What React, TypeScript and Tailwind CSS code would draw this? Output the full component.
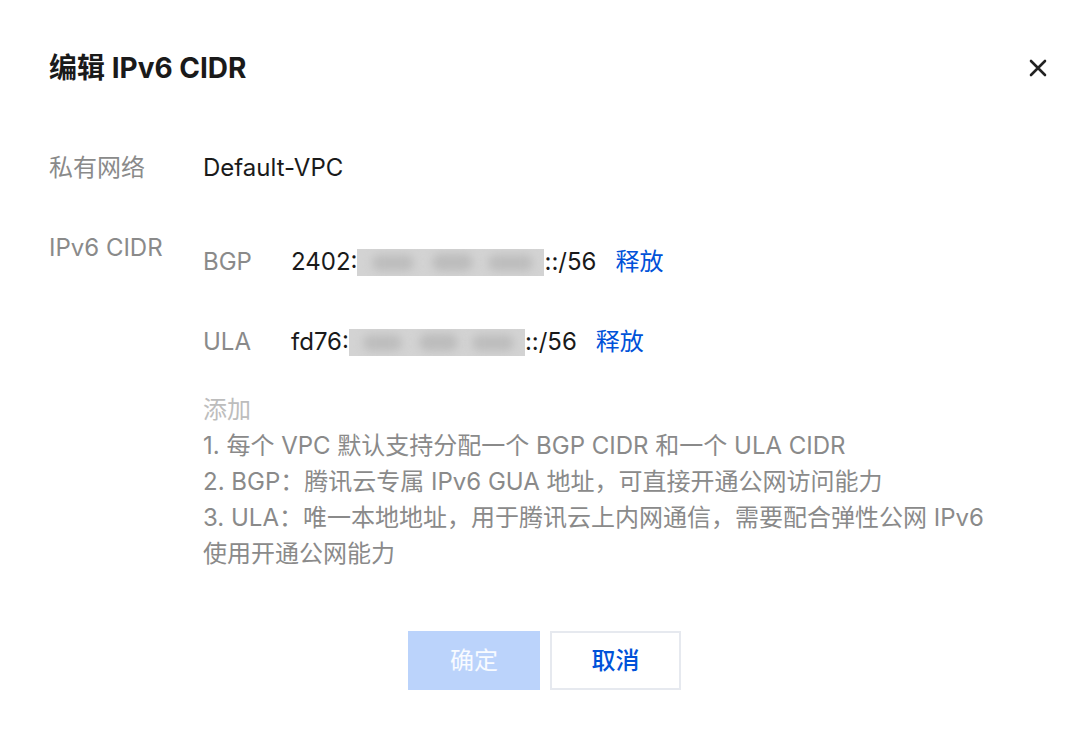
import React from 'react';

const font = 'font-["Inter","Noto_Sans_CJK_SC",sans-serif]';

const Masked: React.FC<{ width: string }> = ({ width }) => (
  <span className={`relative inline-block h-[27px] overflow-hidden bg-[#d3d3d3] ${width}`}>
    <span className="absolute left-[8%] top-[6px] h-[16px] w-[22%] rounded-full bg-[#bdbdbd] blur-[4px]" />
    <span className="absolute left-[40%] top-[5px] h-[17px] w-[22%] rounded-full bg-[#bcbcbc] blur-[4px]" />
    <span className="absolute left-[70%] top-[6px] h-[16px] w-[24%] rounded-full bg-[#bdbdbd] blur-[4px]" />
  </span>
);

const CidrRow: React.FC<{ kind: string; prefix: string; mask: string }> = ({ kind, prefix, mask }) => (
  <div className="flex h-[36px] items-center">
    <span className="w-[88px] text-[#8a8a8a]">{kind}</span>
    <span className="text-[#1a1a1a]">{prefix}</span>
    <Masked width={mask} />
    <span className="text-[#1a1a1a]">::/56</span>
    <button className="ml-[19px] text-[#0052d9]">释放</button>
  </div>
);

export default function App() {
  return (
    <div className={`min-h-[733px] w-full bg-white ${font} text-[24px] leading-[36px]`}>
      <div className="px-[49px] pt-[50px]">
        {/* Header */}
        <div className="flex h-[36px] items-center justify-between">
          <h1 className="text-[28px] font-bold text-[#1a1a1a]">编辑 IPv6 CIDR</h1>
          <button className="mr-[-10px] flex h-[24px] w-[24px] items-center justify-center">
            <svg width="18" height="18" viewBox="0 0 18 18" fill="none">
              <path d="M2 2L16 16M16 2L2 16" stroke="#222" strokeWidth="2.6" strokeLinecap="round" />
            </svg>
          </button>
        </div>

        {/* Body */}
        <div className="mt-[64px] flex">
          <span className="w-[154px] text-[#8a8a8a]">私有网络</span>
          <span className="text-[#1a1a1a]">Default-VPC</span>
        </div>

        <div className="mt-[44px] flex">
          <span className="w-[154px] text-[#8a8a8a]">IPv6 CIDR</span>
          <div className="pt-[14px]">
            <CidrRow kind="BGP" prefix="2402:" mask="w-[187px]" />
            <div className="mt-[44px]">
              <CidrRow kind="ULA" prefix="fd76:" mask="w-[176px]" />
            </div>
            <div className="mt-[32px] text-[#8a8a8a]">
              <p className="text-[#bdbdbd]">添加</p>
              <p>1. 每个 VPC 默认支持分配一个 BGP CIDR 和一个 ULA CIDR</p>
              <p>2. BGP：腾讯云专属 IPv6 GUA 地址，可直接开通公网访问能力</p>
              <p>3. ULA：唯一本地地址，用于腾讯云上内网通信，需要配合弹性公网 IPv6</p>
              <p>使用开通公网能力</p>
            </div>
          </div>
        </div>
      </div>

      {/* Footer */}
      <div className="mt-[59px] flex justify-center gap-[10px]">
        <button className="h-[59px] w-[132px] bg-[#bbd3fb] text-white/90">确定</button>
        <button className="h-[59px] w-[131px] border-2 border-[#e6e9ef] bg-white font-medium text-[#0052d9]">取消</button>
      </div>
    </div>
  );
}
